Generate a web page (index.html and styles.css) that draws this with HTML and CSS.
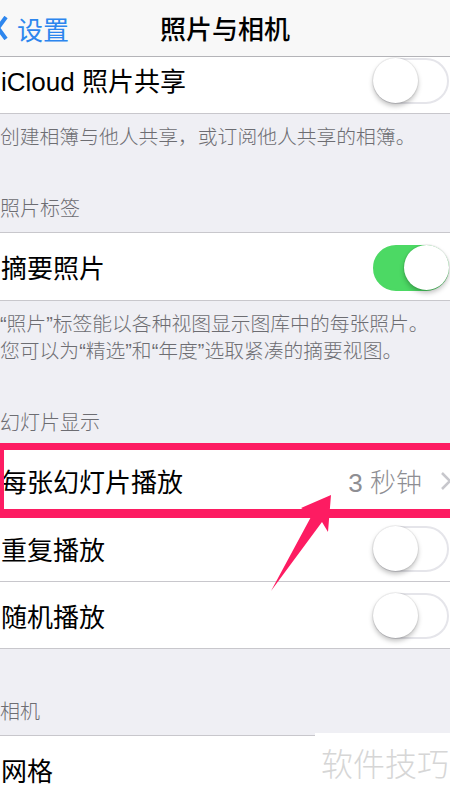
FILE: index.html
```html
<!DOCTYPE html>
<html>
<head>
    <meta charset="UTF-8" />
    <meta name="viewport" content="width=device-width, initial-scale=1.0">
    <title>照片与相机</title>
    <link rel="stylesheet" href="styles.css">
</head>

<body>
    <div class="screen">
        <header class="nav">
            <div class="back">
                <svg class="back-icon" viewBox="0 0 12 24" width="12" height="24">
                    <path d="M9 1 L1 12 L9 23" />
                </svg>
                <span>设置</span>
            </div>
            <div class="nav-title">照片与相机</div>
        </header>

        <div class="group first">
            <div class="row">
                <span class="label">iCloud 照片共享</span>
                <span class="switch"></span>
            </div>
        </div>
        <p class="footer">创建相簿与他人共享，或订阅他人共享的相簿。</p>

        <div class="header">照片标签</div>
        <div class="group">
            <div class="row">
                <span class="label">摘要照片</span>
                <span class="switch on"></span>
            </div>
        </div>
        <p class="footer">“照片”标签能以各种视图显示图库中的每张照片。<br>您可以为“精选”和“年度”选取紧凑的摘要视图。</p>

        <div class="header">幻灯片显示</div>
        <div class="group">
            <div class="row marked">
                <span class="label">每张幻灯片播放</span>
                <span class="detail">3 秒钟</span>
                <svg class="chevron" viewBox="0 0 12 20" width="12" height="20">
                    <path d="M2 2 L10 10 L2 18" />
                </svg>
            </div>
            <div class="row">
                <span class="label">重复播放</span>
                <span class="switch"></span>
            </div>
            <div class="row">
                <span class="label">随机播放</span>
                <span class="switch"></span>
            </div>
        </div>

        <div class="header spaced">相机</div>
        <div class="group">
            <div class="row">
                <span class="label">网格</span>
            </div>
        </div>

        <svg class="arrow" viewBox="0 0 450 800" width="450" height="800">
            <polygon points="331,495 301,508 312,515 271,591 322,522 328,532" />
        </svg>

        <div class="watermark">软件技巧</div>
    </div>
</body>
</html>
```

FILE: styles.css
```css
* {
    margin: 0;
    padding: 0;
    box-sizing: border-box;
}

body {
    font-family: "Liberation Sans", "Noto Sans CJK SC", sans-serif;
    background-color: #efeff4;
    color: #000;
}

.screen {
    position: relative;
    width: 450px;
    height: 800px;
    overflow: hidden;
}

.nav {
    position: relative;
    z-index: 2;
    height: 57px;
    background-color: #f8f8f8;
    border-bottom: 1px solid #b4b4b8;
    display: flex;
    align-items: center;
    justify-content: center;
}

.back {
    position: absolute;
    left: -3px;
    top: 0;
    height: 56px;
    display: flex;
    align-items: center;
    gap: 8px;
    color: #2d86ee;
    font-size: 26px;
}

.back-icon path {
    fill: none;
    stroke: #2d86ee;
    stroke-width: 4;
}

.nav-title {
    font-size: 26px;
    font-weight: 500;
    margin-bottom: 2px;
}

.group {
    background-color: #fff;
    border-top: 1px solid #c8c7cc;
    border-bottom: 1px solid #c8c7cc;
}

.group.first {
    margin-top: -12px;
}

.row {
    position: relative;
    height: 67px;
    display: flex;
    align-items: center;
    padding-right: 1px;
}

.row + .row {
    border-top: 1px solid #c8c7cc;
}

.label {
    flex: 1;
    font-size: 26px;
    padding-left: 1px;
}

.detail {
    font-size: 26px;
    color: #8e8e93;
    margin-right: 18px;
    font-weight: 300;
}

.chevron {
    margin-right: -3px;
}

.chevron path {
    fill: none;
    stroke: #c7c7cc;
    stroke-width: 2.5;
}

.switch {
    position: relative;
    width: 76px;
    height: 46px;
    border-radius: 23px;
    border: 2px solid #e5e5ea;
    background-color: #fff;
    margin-top: 2px;
}

.switch::after {
    content: '';
    position: absolute;
    top: -2px;
    left: -2px;
    width: 45px;
    height: 45px;
    border-radius: 50%;
    background-color: #fff;
    box-shadow: 0 3px 5px rgba(0, 0, 0, 0.25), 0 0 0 1px rgba(0, 0, 0, 0.06);
}

.switch.on {
    background-color: #4cd964;
    border-color: #4cd964;
}

.switch.on::after {
    left: auto;
    right: -2px;
}

.footer {
    padding-top: 10px;
    font-size: 19.8px;
    line-height: 27px;
    color: #6d6d72;
    white-space: nowrap;
    font-weight: 300;
}

.header {
    margin-top: 45px;
    padding-bottom: 9px;
    font-size: 20px;
    line-height: 27px;
    color: #6d6d72;
    font-weight: 300;
}

.header.spaced {
    margin-top: 50px;
}

.marked::after {
    content: '';
    position: absolute;
    z-index: 3;
    top: -4px;
    bottom: -4px;
    left: 0;
    right: -10px;
    border-style: solid;
    border-color: #fd1c62;
    border-width: 7px 5px 9px 4px;
}

.arrow {
    position: absolute;
    z-index: 4;
    left: 0;
    top: 0;
    pointer-events: none;
}

.arrow polygon {
    fill: #fd1c62;
}

.watermark {
    position: absolute;
    z-index: 5;
    left: 315px;
    top: 733px;
    right: 0;
    bottom: 0;
    background-color: #fff;
    padding: 12px 0 0 6px;
    font-size: 32px;
    line-height: 40px;
    color: #d6d6d6;
    font-weight: 300;
}
```
